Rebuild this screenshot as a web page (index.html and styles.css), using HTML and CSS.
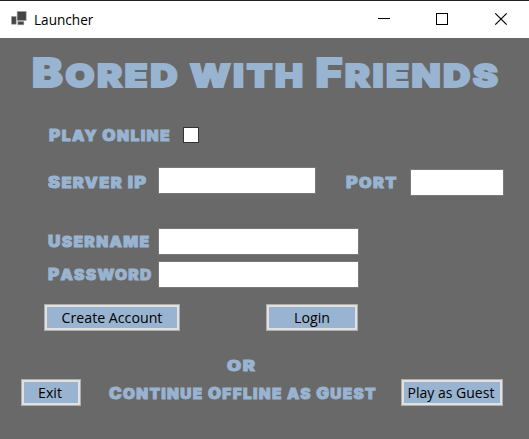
FILE: index.html
```html
<!DOCTYPE html>
<html lang="en">
<head>
<meta charset="utf-8">
<title>Launcher</title>
<link rel="stylesheet" href="styles.css">
</head>
<body>
<div class="window">
  <header class="titlebar">
    <svg class="app-icon" width="16" height="15" viewBox="0 0 16 15"><path fill="#444" stroke="#999" stroke-width=".5" d="M6.2 .5h9v9h-9z M.5 5.5h4.7v7.7H.5z M6.8 10.6h6v3.2h-6z"/></svg>
    <span class="caption">Launcher</span>
    <svg class="controls" width="151" height="37" viewBox="0 0 151 37" fill="none" stroke="#000">
      <path d="M0 17.5H12"/>
      <rect x="58.5" y="12.5" width="11" height="11"/>
      <path d="M117.3 12.3L128.700 23.700M128.700 12.3L117.3 23.700" stroke-width="1.2"/>
    </svg>
  </header>
  <main>
    <h1 class="display"><b>B</b>ored with <b>F</b>riends</h1>
    <div class="row online"><label class="display l-online"><b>P</b>lay <b>O</b>nline</label><input type="checkbox" class="check"></div>
    <div class="row server"><label class="display l-server"><b>S</b>erver <b>IP</b></label><input class="field f-server"><label class="display l-port"><b>P</b>ort</label><input class="field f-port"></div>
    <div class="row user"><label class="display l-user"><b>U</b>sername</label><input class="field"></div>
    <div class="row pass"><label class="display l-pass"><b>P</b>assword</label><input class="field" type="password"></div>
    <div class="row actions"><button class="create">Create Account</button><button class="login">Login</button></div>
    <p class="display or">or</p>
    <div class="row footer"><button class="exit">Exit</button><span class="display guest"><b>C</b>ontinue <b>O</b>ffline as <b>G</b>uest</span><button class="play">Play as Guest</button></div>
  </main>
</div>
</body>
</html>
```
FILE: styles.css
```css
* { box-sizing: border-box; }
body { margin: 0; }
.window { width: 529px; height: 439px; background: #696969; overflow: hidden; font: 14px "Open Sans", sans-serif; }
.titlebar { height: 38px; border-top: 1px solid #242026; background: #fff; display: flex; align-items: center; padding-left: 11px; }
.app-icon { margin-top: -2px; }
.caption { margin-left: 7px; color: #000; font-size: 13.6px; }
.controls { margin-left: auto; }
.display { font-family: Inter, sans-serif; font-weight: 900; font-size: 14px; line-height: 20px; text-transform: uppercase; white-space: nowrap; color: #99b4d1; -webkit-text-stroke: .9px #99b4d1; transform-origin: left top; }
.display b { font-weight: 900; font-size: 1.1em; }
h1.display { margin: 0 0 0 32px; height: 89px; padding-top: 18px; font-size: 32px; line-height: 34px; letter-spacing: 2px; transform: scaleX(1.183); -webkit-text-stroke-width: 1.8px; }
h1.display b { font-size: 1.22em; }
.row { display: flex; }
.row label { flex: none; }
.online { height: 40px; padding-left: 49px; }
.l-online { width: 134px; margin-top: -1px; letter-spacing: 1.2px; transform: scaleX(1.12); }
.check { appearance: none; width: 16px; height: 16px; margin: 0; border: 1px solid #333; background: #fff; }
.server { height: 61px; padding-left: 48px; }
.l-server { width: 110px; padding-top: 6px; letter-spacing: 1.2px; transform: scaleX(1.17); }
.l-port { width: 64px; margin-left: 30px; padding-top: 6px; letter-spacing: 1.2px; transform: scaleX(1.16); }
.field { width: 201px; height: 27px; margin: 0; padding: 3px; border: 1px solid #7a7a7a; background: #fff; }
.f-server { width: 158px; }
.f-port { width: 94px; margin-top: 2px; }
.user { height: 33px; padding-left: 48px; }
.pass { height: 43px; padding-left: 48px; }
.l-user, .l-pass { width: 110px; padding-top: 4px; letter-spacing: 1.2px; transform: scaleX(1.115); }
button { height: 27px; flex: none; padding: 0; border: 1px solid #adadad; box-shadow: inset 0 0 0 2px #e1e1e1; background: #99b4d1; color: #000; font: 14.2px/23px "Open Sans", sans-serif; }
.actions { height: 51px; padding-left: 44px; }
.create { width: 136px; }
.login { width: 92px; margin-left: 86px; }
.or { margin: 0 0 0 227px; height: 24px; padding-top: 1px; letter-spacing: 1.2px; transform: scaleX(1.3); }
.footer { padding-left: 21px; }
.exit { width: 60px; padding-right: 2px; }
.guest { width: 292px; margin-left: 28px; padding-top: 5px; letter-spacing: 1.2px; transform: scaleX(1.1); }
.play { width: 102px; padding-right: 2px; font-size: 14px; }
```
